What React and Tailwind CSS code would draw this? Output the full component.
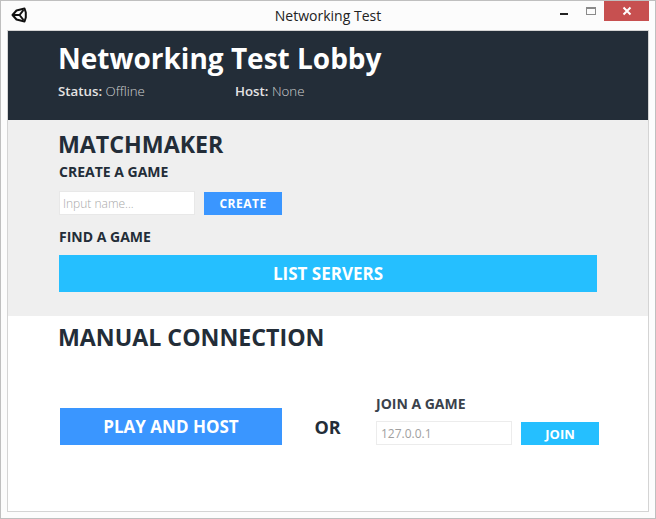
function UnityLogo() {
  return (
    <svg width="16" height="16" viewBox="0 0 16 16" fill="none" stroke="#111" strokeWidth="2">
      <path d="M1.5 8 L5.5 3.5 L13.5 1.5 L14.8 5.5 L14.8 10.5 L13.5 14.5 L5.5 12.5 Z" strokeLinejoin="round" />
      <path d="M2 8 H8.5 L12.5 3 M8.5 8 L12.5 13" />
    </svg>
  )
}

function TitleBar() {
  return (
    <div className="h-[29px] grid grid-cols-[1fr_auto_1fr]">
      <div className="pl-[10px] pt-[6px]">
        <UnityLogo />
      </div>
      <div className="text-[14px] leading-[30px] text-[#222]">Networking Test</div>
      <div className="flex justify-end h-[20px] mr-[6px]">
        <div className="w-[28px] flex justify-center">
          <div className="w-[8px] h-[2px] bg-[#222] mt-[12px]"></div>
        </div>
        <div className="w-[26px] flex justify-center">
          <div className="w-[10px] h-[8px] border border-[#8a8a8a] border-t-2 mt-[6px]"></div>
        </div>
        <div className="w-[45px] bg-[#c75050] flex items-center justify-center">
          <svg width="10" height="10" viewBox="0 0 10 10" stroke="#fff" strokeWidth="2">
            <path d="M1.5 1.5 L8.5 8.5 M8.5 1.5 L1.5 8.5" />
          </svg>
        </div>
      </div>
    </div>
  )
}

function Header() {
  return (
    <div className="h-[89px] bg-[#232d38] pl-[50px] pt-[8px] text-white">
      <h1 className="text-[28px] leading-[38px] font-bold">Networking Test Lobby</h1>
      <div className="flex text-[13.3px] leading-[18px] mt-[5px]">
        <div className="w-[177px]">
          <span className="font-semibold text-[#e3e3e3]">Status:</span> <span className="font-light text-[#cfcfcf]">Offline</span>
        </div>
        <div>
          <span className="font-semibold text-[#e3e3e3]">Host:</span> <span className="font-light text-[#cfcfcf]">None</span>
        </div>
      </div>
    </div>
  )
}

function Matchmaker() {
  return (
    <div className="h-[196px] bg-[#efefef] pl-[51px] pt-[8px] text-[#232d38]">
      <h2 className="-ml-[1px] text-[23.2px] leading-[32px] font-bold">MATCHMAKER</h2>
      <h3 className="text-[14px] leading-[20px] font-bold mt-[2px]">CREATE A GAME</h3>
      <div className="flex items-center mt-[9px]">
        <div className="w-[136px] h-[24px] bg-white border border-[#e8e8e8] pl-[3px] text-[12px] leading-[24px] font-light text-[#a8a8a8]">Input name...</div>
        <div className="w-[78px] h-[23px] ml-[9px] bg-[#3a96ff] text-white text-[12px] leading-[24px] font-bold text-center tracking-[0.5px]">CREATE</div>
      </div>
      <h3 className="text-[14px] leading-[20px] font-bold mt-[12px]">FIND A GAME</h3>
      <div className="w-[538px] h-[37px] mt-[8px] bg-[#25bfff] text-white text-[17px] leading-[37px] font-bold text-center">LIST SERVERS</div>
    </div>
  )
}

function ManualConnection() {
  return (
    <div className="flex-1 bg-white pl-[51px] pt-[5px] text-[#232d38]">
      <h2 className="-ml-[1px] text-[23.2px] leading-[32px] font-bold">MANUAL CONNECTION</h2>
      <div className="flex mt-[39px]">
        <div className="w-[222px] h-[37px] ml-[1px] mt-[16px] bg-[#3a96ff] text-white text-[17px] leading-[37px] font-bold text-center">PLAY AND HOST</div>
        <div className="w-[91px] mr-[3px] text-center text-[18px] leading-[22px] font-bold mt-[24px]">OR</div>
        <div className="pt-[3px]">
          <h3 className="text-[14px] leading-[18px] font-bold text-[#3a424c]">JOIN A GAME</h3>
          <div className="flex items-center mt-[8px]">
            <div className="w-[136px] h-[24px] bg-white border border-[#ececec] pl-[4px] text-[12px] leading-[24px] text-[#a0a0a0]">127.0.0.1</div>
            <div className="w-[78px] h-[23px] ml-[9px] bg-[#25bfff] text-white text-[13px] leading-[24px] font-bold text-center">JOIN</div>
          </div>
        </div>
      </div>
    </div>
  )
}

export default function App() {
  return (
    <div className="w-[656px] h-[519px] bg-[#fcfcfc] border border-[#bfbfbf] flex flex-col font-['Open_Sans',sans-serif]">
      <TitleBar />
      <div className="ml-[6px] mr-[6px] mb-[6px] flex-1 flex flex-col border border-[#d4d4d4]">
        <Header />
        <Matchmaker />
        <ManualConnection />
      </div>
    </div>
  )
}
